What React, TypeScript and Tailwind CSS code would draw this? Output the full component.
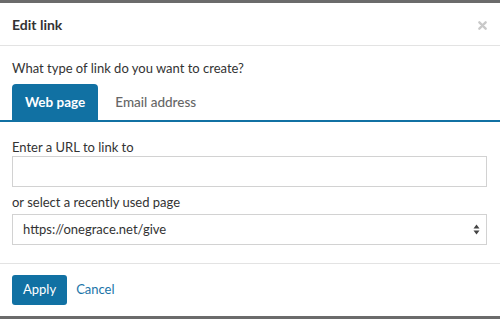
export default function App() {
    return (
        <div className="w-[500px] h-[319px] bg-white border-t-[3px] border-b-[3px] border-[#6b6b6b] flex flex-col text-[13px] text-[#333]" style={{ fontFamily: "Lato, 'Open Sans', sans-serif" }}>
            <div className="h-[43px] px-3 flex items-center justify-between border-b border-[#e3e3e3]">
                <h1 className="text-[14px] font-bold text-[#333]">Edit link</h1>
                <svg width="9" height="9" viewBox="0 0 10 10" className="mr-[1px] mt-[3px]">
                    <path d="M1.5 1.5 L8.5 8.5 M8.5 1.5 L1.5 8.5" stroke="#c9c9c9" strokeWidth="2.6" strokeLinecap="round" />
                </svg>
            </div>
            <div className="pt-[13px]">
                <p className="px-3 leading-[18px]">What type of link do you want to create?</p>
                <div className="mt-[7px] px-3 flex border-b-[2px] border-[#1171a3]">
                    <div className="h-[36px] px-[13px] flex items-center bg-[#1171a3] text-white text-[13.5px] font-bold rounded-t-[4px]">
                        Web page
                    </div>
                    <div className="h-[36px] px-[17px] flex items-center text-[#666] text-[13.5px] font-medium">
                        Email address
                    </div>
                </div>
                <div className="px-3 pt-[16px]">
                    <label className="block leading-[18px]">Enter a URL to link to</label>
                    <input className="mt-0 block w-[475px] h-[31px] border border-[#d2d2d2] px-2 outline-none" />
                    <label className="block mt-[6px] leading-[18px]">or select a recently used page</label>
                    <div className="mt-[3px] w-[475px] h-[31px] border border-[#d2d2d2] flex items-center justify-between pl-[10px] pr-[6px]">
                        <span>https://onegrace.net/give</span>
                        <svg width="7" height="11" viewBox="0 0 7 11">
                            <path d="M3.5 0.5 L6.5 4.5 L0.5 4.5 Z M3.5 10.5 L6.5 6.5 L0.5 6.5 Z" fill="#444" />
                        </svg>
                    </div>
                </div>
            </div>
            <div className="mt-[18px] border-t border-[#e3e3e3] px-3 pt-[11px] flex items-center gap-[9px]">
                <button className="h-[30px] px-[11px] bg-[#1171a3] text-white rounded-[3px] text-[13px]">Apply</button>
                <button className="text-[#1b74a8] text-[13px]">Cancel</button>
            </div>
        </div>
    );
}
